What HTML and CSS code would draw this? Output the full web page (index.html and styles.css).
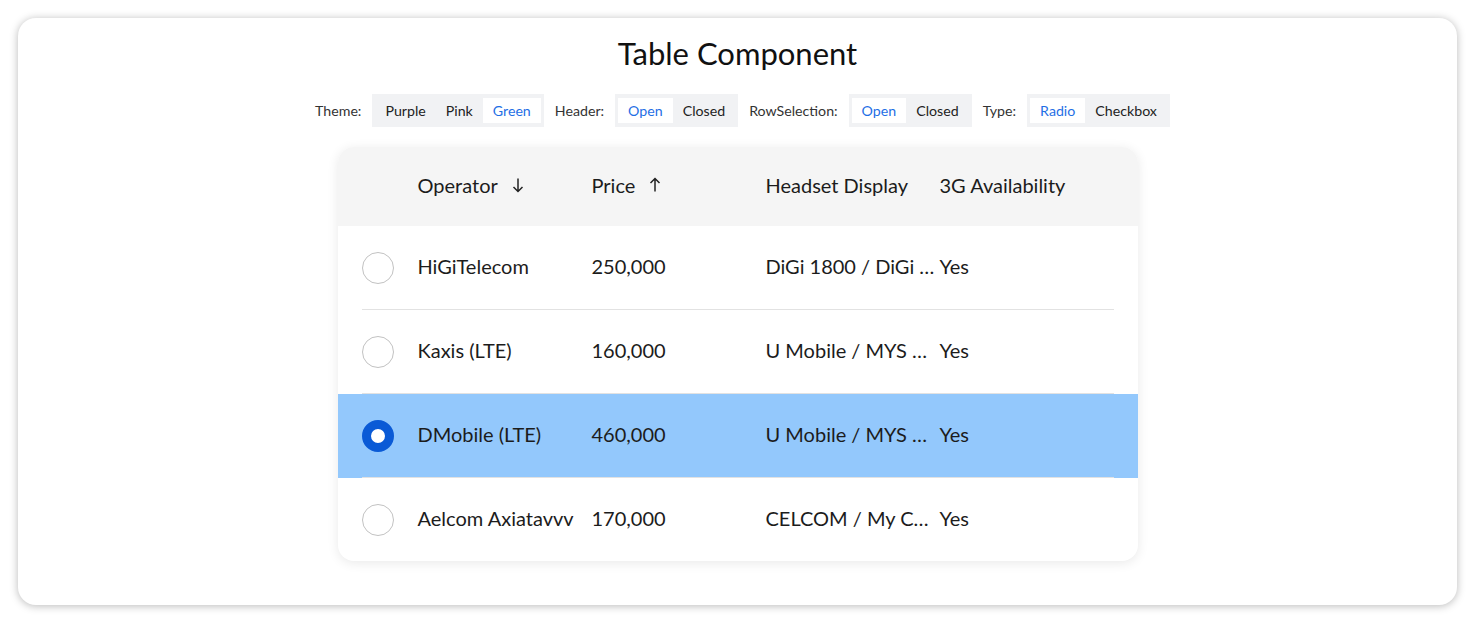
FILE: index.html
```html
<!DOCTYPE html>
<html lang="en">
<head>
  <meta charset="UTF-8">
  <title>Table Component</title>
  <link rel="stylesheet" href="styles.css">
</head>
<body>
  <div class="frame">
    <h1>Table Component</h1>

    <div class="controls">
      <span class="label">Theme:</span>
      <div class="segment">
        <button>Purple</button>
        <button>Pink</button>
        <button class="active">Green</button>
      </div>
      <span class="label">Header:</span>
      <div class="segment">
        <button class="active">Open</button>
        <button>Closed</button>
      </div>
      <span class="label">RowSelection:</span>
      <div class="segment">
        <button class="active">Open</button>
        <button>Closed</button>
      </div>
      <span class="label">Type:</span>
      <div class="segment">
        <button class="active">Radio</button>
        <button>Checkbox</button>
      </div>
    </div>

    <div class="table">
      <div class="thead">
        <div class="cells">
          <div class="sel"></div>
          <div class="cell">Operator
            <svg class="sort" width="14" height="16" viewBox="0 0 14 16"><path d="M7 1.5v13M2.5 10l4.5 4.5 4.5-4.5" fill="none" stroke="#222" stroke-width="1.5"/></svg>
          </div>
          <div class="cell">Price
            <svg class="sort" width="14" height="16" viewBox="0 0 14 16"><path d="M7 14.5v-13M2.5 6l4.5-4.5 4.5 4.5" fill="none" stroke="#222" stroke-width="1.5"/></svg>
          </div>
          <div class="cell">Headset Display</div>
          <div class="cell">3G Availability</div>
        </div>
      </div>

      <div class="row">
        <div class="cells">
          <div class="sel"><span class="radio"></span></div>
          <div class="cell">HiGiTelecom</div>
          <div class="cell">250,000</div>
          <div class="cell clip">DiGi 1800 / DiGi 2100 / DiGi</div>
          <div class="cell">Yes</div>
        </div>
      </div>
      <div class="row">
        <div class="cells">
          <div class="sel"><span class="radio"></span></div>
          <div class="cell">Kaxis (LTE)</div>
          <div class="cell">160,000</div>
          <div class="cell clip">U Mobile / MYS MAXIS</div>
          <div class="cell">Yes</div>
        </div>
      </div>
      <div class="row selected">
        <div class="cells">
          <div class="sel"><span class="radio checked"></span></div>
          <div class="cell">DMobile (LTE)</div>
          <div class="cell">460,000</div>
          <div class="cell clip">U Mobile / MYS MAXIS</div>
          <div class="cell">Yes</div>
        </div>
      </div>
      <div class="row last">
        <div class="cells">
          <div class="sel"><span class="radio"></span></div>
          <div class="cell">Aelcom Axiatavvv</div>
          <div class="cell">170,000</div>
          <div class="cell clip">CELCOM / My Celcom / 502</div>
          <div class="cell">Yes</div>
        </div>
      </div>
    </div>
  </div>
</body>
</html>
```

FILE: styles.css
```css
body {
  margin: 0;
  background-color: #fff;
  font-family: 'Lato', 'Noto Sans', sans-serif;
  color: #1c1c1c;
}
.frame {
  margin: 18px;
  height: 587px;
  box-sizing: border-box;
  background-color: #fff;
  border-radius: 18px;
  box-shadow: 0 1px 8px rgba(0,0,0,0.28);
  padding-top: 16px;
}
h1 {
  margin: 0;
  text-align: center;
  font-weight: 400;
  font-size: 31px;
  line-height: 38px;
  color: #111;
}
.controls {
  display: flex;
  justify-content: center;
  align-items: center;
  margin-top: 22px;
  padding-left: 10px;
  font-size: 14.2px;
}
.label {
  color: #333;
  margin-right: 11px;
}
.segment {
  display: flex;
  background-color: #f1f2f4;
  padding: 4px 3px;
  margin-right: 11px;
}
.segment:last-child {
  margin-right: 0;
}
.segment button {
  font-family: inherit;
  font-size: 14.2px;
  color: #222;
  background: transparent;
  border: none;
  padding: 0 10px;
  height: 25px;
  line-height: 25px;
  cursor: pointer;
}
.segment button.active {
  background-color: #fff;
  color: #1f6fe5;
}
.table {
  width: 800px;
  margin: 20px auto 0;
  background-color: #fff;
  border-radius: 16px;
  box-shadow: 0 2px 12px rgba(0,0,0,0.09);
  overflow: hidden;
  font-size: 20px;
}
.thead {
  background-color: #f5f5f5;
  padding: 0 24px;
}
.thead .cells {
  height: 79px;
}
.row {
  padding: 0 24px;
}
.row .cells {
  height: 83px;
  border-bottom: 1px solid #e2e2e2;
}
.row.last .cells {
  border-bottom: none;
}
.row.selected {
  background-color: #93c8fc;
}
.cells {
  display: grid;
  grid-template-columns: 56px 174px 174px 174px 174px;
  align-items: center;
}
.cell {
  white-space: nowrap;
  display: flex;
  align-items: center;
  padding-bottom: 4px;
}
.cell.clip {
  display: block;
  overflow: hidden;
  text-overflow: ellipsis;
  padding-right: 4px;
}
.sort {
  margin-left: 13px;
}
.sel {
  display: flex;
  align-items: center;
}
.radio {
  width: 32px;
  height: 32px;
  box-sizing: border-box;
  border-radius: 50%;
  border: 1px solid #c2c2c2;
  background-color: #fff;
}
.radio.checked {
  border: 9px solid #0a5ad6;
}
```
